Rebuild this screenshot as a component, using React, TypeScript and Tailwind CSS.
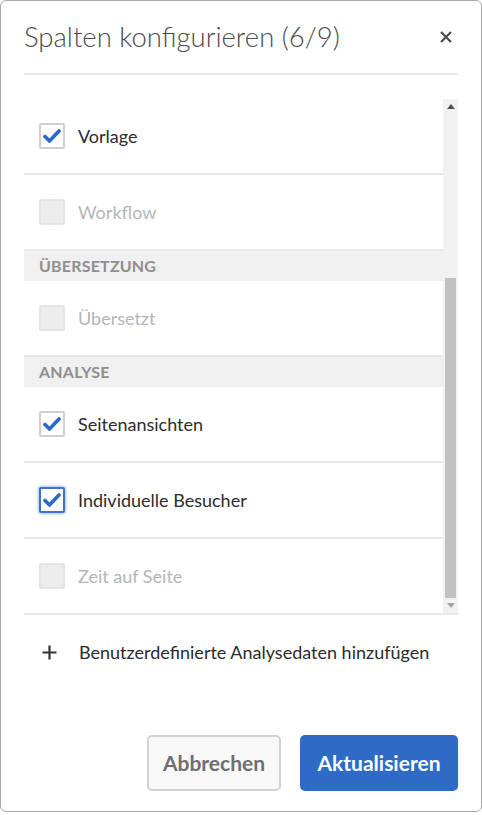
import React from "react";

const font = { fontFamily: "Lato, 'Open Sans', sans-serif" };

function Check({ state }: { state: "checked" | "disabled" | "focused" }) {
  if (state === "disabled") {
    return <div className="w-[26px] h-[26px] shrink-0 rounded-[2px] bg-[#ececec] border-2 border-[#e4e4e4]" />;
  }
  const focused = state === "focused";
  return (
    <div
      className={
        focused
          ? "w-[26px] h-[26px] shrink-0 rounded-[2px] bg-white border-2 border-[#3b73c9] shadow-[0_0_3px_1px_rgba(59,115,201,0.45)] flex items-center justify-center"
          : "w-[26px] h-[26px] shrink-0 rounded-[2px] bg-white border-2 border-[#cfcfcf] flex items-center justify-center"
      }
    >
      <svg width="18" height="14" viewBox="0 0 18 14">
        <path d="M2 7.5 L6.5 12 L16 2" fill="none" stroke="#2d6ac6" strokeWidth="3.6" strokeLinecap="round" strokeLinejoin="round" />
      </svg>
    </div>
  );
}

function Row({ label, state, last }: { label: string; state: "checked" | "disabled" | "focused"; last?: boolean }) {
  return (
    <div className={last ? "h-[74px] flex items-center pl-[15px] gap-[13px]" : "h-[76px] flex items-center pl-[15px] gap-[13px] border-b-2 border-[#e8e8e8]"}>
      <Check state={state} />
      <span className={state === "disabled" ? "text-[18px] text-[#b5b5b5]" : "text-[18px] text-[#2c2c2c]"}>{label}</span>
    </div>
  );
}

function Section({ label }: { label: string }) {
  return (
    <div className="h-[30px] bg-[#f0f0f0] flex items-center pl-[15px]">
      <span className="text-[16px] font-bold text-[#8e8e8e] tracking-[0.2px]">{label}</span>
    </div>
  );
}

export default function App() {
  return (
    <div className="w-[482px] h-[815px] bg-white" style={font}>
      <div className="h-[812px] bg-white border border-[#a9a9a9] rounded-[6px] flex flex-col">
        <div className="h-[72px] px-[23px] flex items-center justify-between">
          <h1 className="text-[27.5px] font-light text-[#4b4b4b] leading-none">Spalten konfigurieren (6/9)</h1>
          <svg width="14" height="14" viewBox="0 0 14 14" className="mr-[5px]">
            <path d="M2 2 L12 12 M12 2 L2 12" stroke="#4b4b4b" strokeWidth="2.2" />
          </svg>
        </div>
        <div className="mx-[23px] h-[2px] bg-[#e9e9e9]" />
        <div className="h-[24px]" />
        <div className="mx-[23px] flex border-b-2 border-[#e8e8e8]">
          <div className="flex-1 flex flex-col">
            <Row label="Vorlage" state="checked" />
            <Row label="Workflow" state="disabled" />
            <Section label="ÜBERSETZUNG" />
            <Row label="Übersetzt" state="disabled" />
            <Section label="ANALYSE" />
            <Row label="Seitenansichten" state="checked" />
            <Row label="Individuelle Besucher" state="focused" />
            <Row label="Zeit auf Seite" state="disabled" last />
          </div>
          <div className="w-[15px] bg-[#f1f1f1] flex flex-col">
            <div className="h-[15px] flex items-center justify-center">
              <svg width="8" height="5" viewBox="0 0 8 5"><path d="M0 5 L4 0 L8 5 Z" fill="#505050" /></svg>
            </div>
            <div className="h-[164px]" />
            <div className="flex-1 mx-[2px] bg-[#c1c1c1]" />
            <div className="h-[15px] flex items-center justify-center">
              <svg width="8" height="5" viewBox="0 0 8 5"><path d="M0 0 L4 5 L8 0 Z" fill="#a3a3a3" /></svg>
            </div>
          </div>
        </div>
        <div className="h-[74px] flex items-center pl-[41px] gap-[22px]">
          <svg width="15" height="15" viewBox="0 0 15 15">
            <path d="M7.5 0.5 V14.5 M0.5 7.5 H14.5" stroke="#333" strokeWidth="2.2" />
          </svg>
          <span className="text-[18px] text-[#2c2c2c]">Benutzerdefinierte Analysedaten hinzufügen</span>
        </div>
        <div className="flex-1" />
        <div className="flex justify-end gap-[19px] px-[23px] pb-[20px]">
          <button className="w-[134px] h-[56px] rounded-[5px] border-2 border-[#d2d2d2] bg-[#f8f8f8] text-[21px] font-bold text-[#6e6e6e]">
            Abbrechen
          </button>
          <button className="w-[158px] h-[56px] rounded-[5px] bg-[#2e6bc7] text-[21px] font-bold text-white">
            Aktualisieren
          </button>
        </div>
      </div>
    </div>
  );
}
